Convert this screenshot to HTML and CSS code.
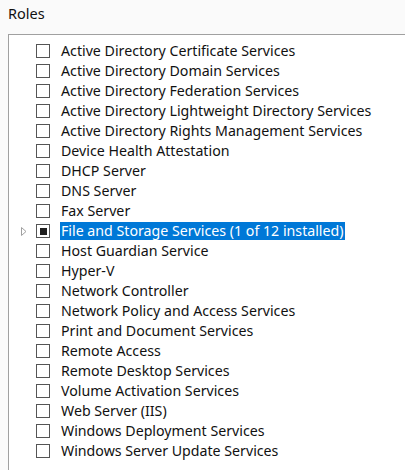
FILE: index.html
```html
<!DOCTYPE html>
<html>
<head>
<meta charset="utf-8">
<link rel="stylesheet" href="styles.css">
</head>
<body>
<div class="title">Roles</div>
<div class="panel">
  <ul class="list">
    <li class="row"><span class="exp"></span><span class="cb"></span><span class="label">Active Directory Certificate Services</span></li>
    <li class="row"><span class="exp"></span><span class="cb"></span><span class="label">Active Directory Domain Services</span></li>
    <li class="row"><span class="exp"></span><span class="cb"></span><span class="label">Active Directory Federation Services</span></li>
    <li class="row"><span class="exp"></span><span class="cb"></span><span class="label">Active Directory Lightweight Directory Services</span></li>
    <li class="row"><span class="exp"></span><span class="cb"></span><span class="label">Active Directory Rights Management Services</span></li>
    <li class="row"><span class="exp"></span><span class="cb"></span><span class="label">Device Health Attestation</span></li>
    <li class="row"><span class="exp"></span><span class="cb"></span><span class="label">DHCP Server</span></li>
    <li class="row"><span class="exp"></span><span class="cb"></span><span class="label">DNS Server</span></li>
    <li class="row"><span class="exp"></span><span class="cb"></span><span class="label">Fax Server</span></li>
    <li class="row"><span class="exp"><svg width="6" height="9" viewBox="0 0 6 9"><path d="M0.5 0.5 L5 4.5 L0.5 8.5 Z" fill="none" stroke="#a0a0a0" stroke-width="1"/></svg></span><span class="cb partial"></span><span class="label selected">File and Storage Services (1 of 12 installed)</span></li>
    <li class="row"><span class="exp"></span><span class="cb"></span><span class="label">Host Guardian Service</span></li>
    <li class="row"><span class="exp"></span><span class="cb"></span><span class="label">Hyper-V</span></li>
    <li class="row"><span class="exp"></span><span class="cb"></span><span class="label">Network Controller</span></li>
    <li class="row"><span class="exp"></span><span class="cb"></span><span class="label">Network Policy and Access Services</span></li>
    <li class="row"><span class="exp"></span><span class="cb"></span><span class="label">Print and Document Services</span></li>
    <li class="row"><span class="exp"></span><span class="cb"></span><span class="label">Remote Access</span></li>
    <li class="row"><span class="exp"></span><span class="cb"></span><span class="label">Remote Desktop Services</span></li>
    <li class="row"><span class="exp"></span><span class="cb"></span><span class="label">Volume Activation Services</span></li>
    <li class="row"><span class="exp"></span><span class="cb"></span><span class="label">Web Server (IIS)</span></li>
    <li class="row"><span class="exp"></span><span class="cb"></span><span class="label">Windows Deployment Services</span></li>
    <li class="row"><span class="exp"></span><span class="cb"></span><span class="label">Windows Server Update Services</span></li>
  </ul>
</div>
</body>
</html>
```
FILE: styles.css
```css
html, body {
  margin: 0;
  padding: 0;
  background: #fafafa;
  width: 405px;
  height: 470px;
  overflow: hidden;
  font-family: "Noto Sans", "Open Sans", sans-serif;
  color: #111111;
}
body {
  display: flex;
  flex-direction: column;
}
.title {
  font-size: 14.5px;
  padding: 3px 0 0 8px;
  height: 34px;
  box-sizing: border-box;
  line-height: 20px;
  flex: none;
}
.panel {
  flex: 1;
  min-height: 0;
  overflow: hidden;
  margin-left: 8px;
  border-left: 1px solid #a0a0a0;
  border-top: 1px solid #a0a0a0;
  background: #ffffff;
}
.list {
  list-style: none;
  margin: 0;
  padding: 6px 0 0 0;
}
.row {
  display: flex;
  align-items: center;
  height: 20px;
  font-size: 14.2px;
}
.exp {
  width: 6px;
  height: 9px;
  margin-left: 12px;
  display: flex;
}
.cb {
  width: 12px;
  height: 12px;
  border: 1px solid #555555;
  margin-left: 9px;
  background: #fff;
  display: flex;
  align-items: center;
  justify-content: center;
}
.cb.partial::after {
  content: "";
  width: 7px;
  height: 7px;
  background: #1f1f1f;
}
.label {
  margin-left: 10px;
  padding: 0 1px;
  line-height: 18px;
  white-space: nowrap;
}
.selected {
  background: #0078d7;
  color: #ffffff;
}
```
